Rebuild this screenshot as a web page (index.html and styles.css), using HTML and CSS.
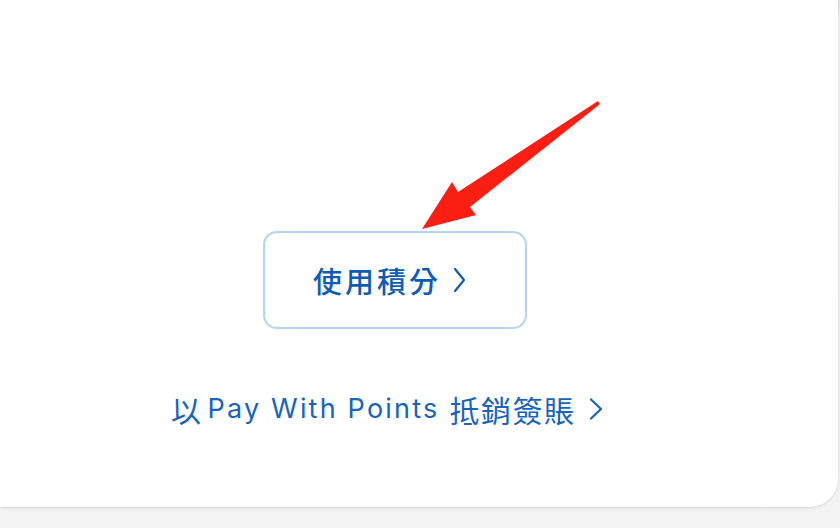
FILE: index.html
```html
<!DOCTYPE html>
<html lang="zh-Hant">
<head>
<meta charset="utf-8">
<link rel="stylesheet" href="styles.css">
</head>
<body>
<div class="page">
  <div class="card">
    <div class="actions">
      <button class="use-points" type="button">
        <span class="label">使用積分</span>
        <svg class="chev" width="13" height="26" viewBox="0 0 13 26" aria-hidden="true"><path d="M2 2 L11 13 L2 24" fill="none" stroke="currentColor" stroke-width="2.2" stroke-linecap="round" stroke-linejoin="round"/></svg>
      </button>
      <a class="pwp-link" href="#"><span class="cjk">以</span><span class="latin">Pay With Points</span><span class="cjk cjk-tail">抵銷簽賬</span><svg class="chev link-chev" width="14" height="22" viewBox="0 0 14 22" aria-hidden="true"><path d="M2 1.5 L12 11 L2 20.5" fill="none" stroke="currentColor" stroke-width="2.2" stroke-linecap="round" stroke-linejoin="round"/></svg></a>
    </div>
    <svg class="annotation" width="840" height="528" viewBox="0 0 840 528" aria-hidden="true">
      <polygon points="598,101 600,104 470,207 476,215 422,229 452,182 458,192" fill="#fa1f12"/>
    </svg>
  </div>
</div>
</body>
</html>
```

FILE: styles.css
```css
html, body {
  margin: 0;
  padding: 0;
}
body {
  width: 840px;
  height: 528px;
  overflow: hidden;
  background: linear-gradient(#e3e3e3, #efefef 18px, #f3f3f3);
  font-family: "Inter", "Noto Sans CJK TC", sans-serif;
}
.page {
  width: 840px;
  height: 528px;
}
.card {
  position: relative;
  width: 838px;
  height: 507px;
  background: #ffffff;
  border-bottom-right-radius: 28px;
  box-shadow: 0 1px 3px rgba(0, 0, 0, 0.12);
  box-sizing: border-box;
  padding-top: 231px;
  padding-left: 171px;
}
.actions {
  display: flex;
  flex-direction: column;
  align-items: flex-start;
}
.use-points {
  margin-left: 92px;
  width: 264px;
  height: 98px;
  box-sizing: border-box;
  border: 2px solid #b3d5f4;
  border-radius: 14px;
  background: #fff;
  color: #0f5cb5;
  display: flex;
  align-items: center;
  justify-content: flex-start;
  padding: 0 0 0 48px;
  font-family: "Noto Sans CJK TC", sans-serif;
  font-size: 29px;
  font-weight: 500;
  cursor: pointer;
}
.use-points .label {
  line-height: 1;
  letter-spacing: 3px;
}
.use-points .chev {
  margin-left: 12px;
}
.pwp-link {
  margin-top: 62px;
  color: #1664be;
  text-decoration: none;
  display: flex;
  align-items: center;
  height: 36px;
}
.cjk {
  font-family: "Noto Sans CJK TC", sans-serif;
  font-size: 30px;
  line-height: 36px;
  letter-spacing: 1.5px;
}
.latin {
  font-family: "Inter", sans-serif;
  font-size: 27px;
  line-height: 36px;
  letter-spacing: 2.2px;
  margin-left: 5px;
}
.cjk-tail {
  margin-left: 10px;
}
.chev {
  display: block;
}
.link-chev {
  margin-left: 14px;
}
.annotation {
  position: absolute;
  left: 0;
  top: 0;
  pointer-events: none;
}
```
